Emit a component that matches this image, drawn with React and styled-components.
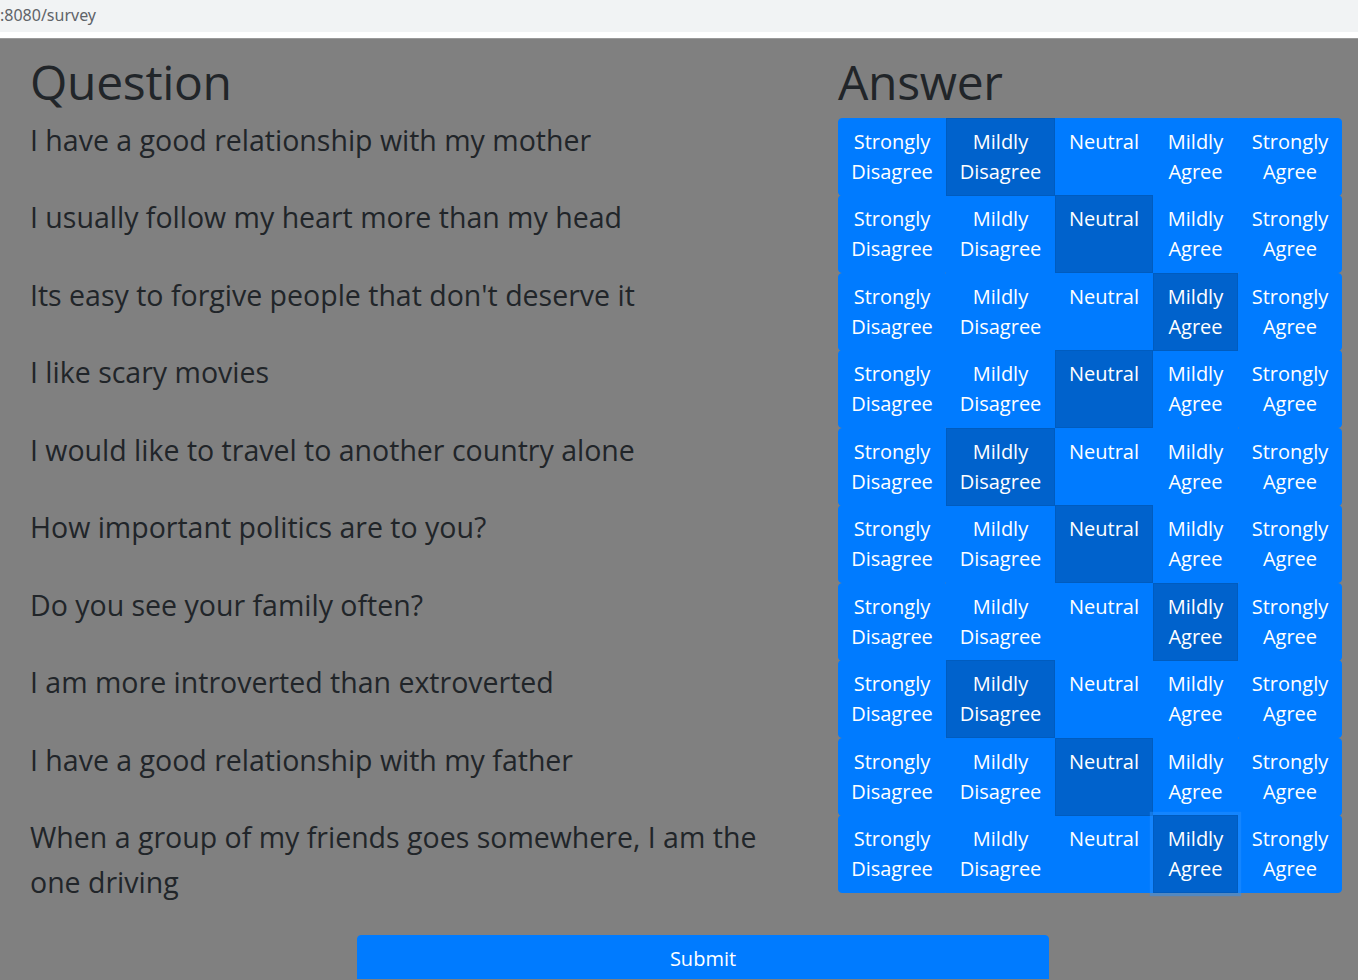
import React from "react";
import styled, { createGlobalStyle, css } from "styled-components";

const GlobalStyle = createGlobalStyle`
  html, body { margin: 0; padding: 0; }
  body {
    background: #808080;
    font-family: "Open Sans", "Noto Sans", Arial, sans-serif;
    color: #212529;
    overflow: hidden;
  }
`;

const BrowserBar = styled.div`
  height: 32px;
  background: #f1f3f4;
  border-bottom: 6px solid #ffffff;
  display: flex;
  align-items: center;
  font-family: "Noto Sans", "Open Sans", Arial, sans-serif;
  font-size: 16px;
  color: #5f6368;
  white-space: nowrap;
`;

const UrlText = styled.span`
  margin-left: 0;
  margin-top: -2px;
`;

const Page = styled.div`
  background: #808080;
  border-top: 1px solid #9a9a9a;
  height: 941px;
  box-sizing: border-box;
  overflow: hidden;
`;

const Survey = styled.div`
  display: grid;
  grid-template-columns: 1fr 504px;
  column-gap: 30px;
  padding: 0 16px 0 30px;
`;

const Heading = styled.h1`
  margin: 14px 0 7px;
  font-size: 48px;
  line-height: 57.6px;
  font-weight: 400;
  color: #212529;
  letter-spacing: -0.3px;
`;

const Question = styled.div`
  height: 77.5px;
  font-size: 28.5px;
  line-height: 45px;
  color: #212529;
  white-space: normal;
  padding-right: 20px;
`;

const ButtonGroup = styled.div`
  display: grid;
  grid-template-columns: 108px 109px 98px 85px 104px;
  height: 77.5px;
  position: relative;
`;

const AnswerButton = styled.button`
  font-family: inherit;
  font-size: 20px;
  line-height: 30px;
  color: #ffffff;
  background: #007bff;
  border: 1px solid #007bff;
  padding: 8px 0;
  margin: 0;
  display: flex;
  flex-direction: column;
  align-items: center;
  justify-content: flex-start;
  white-space: nowrap;
  cursor: pointer;
  position: relative;
  &:first-child { border-radius: 4px 0 0 4px; }
  &:last-child { border-radius: 0 4px 4px 0; }
  ${(p) =>
    p.$active &&
    css`
      background: #0062cc;
      border-color: #005cbf;
      z-index: 1;
    `}
  ${(p) =>
    p.$focused &&
    css`
      box-shadow: 0 0 0 3.2px rgba(38, 143, 255, 0.5);
      z-index: 2;
    `}
`;

const Line = styled.span`
  display: block;
`;

const Footer = styled.div`
  display: flex;
  padding: 42px 309px 0 357px;
`;

const SubmitButton = styled.button`
  flex: 1;
  font-family: inherit;
  font-size: 20px;
  line-height: 30px;
  padding: 8px 16px;
  color: #ffffff;
  background: #007bff;
  border: 1px solid #007bff;
  border-radius: 4px;
  cursor: pointer;
`;

const OPTIONS = [
  ["Strongly", "Disagree"],
  ["Mildly", "Disagree"],
  ["Neutral", ""],
  ["Mildly", "Agree"],
  ["Strongly", "Agree"],
];

const QUESTIONS = [
  ["I have a good relationship with my mother", 1],
  ["I usually follow my heart more than my head", 2],
  ["Its easy to forgive people that don't deserve it", 3],
  ["I like scary movies", 2],
  ["I would like to travel to another country alone", 1],
  ["How important politics are to you?", 2],
  ["Do you see your family often?", 3],
  ["I am more introverted than extroverted", 1],
  ["I have a good relationship with my father", 2],
  ["When a group of my friends goes somewhere, I am the one driving", 3],
];

export default function App() {
  const [answers, setAnswers] = React.useState(QUESTIONS.map((q) => q[1]));
  return (
    <>
      <GlobalStyle />
      <BrowserBar>
        <UrlText>:8080/survey</UrlText>
      </BrowserBar>
      <Page>
        <Survey>
          <Heading>Question</Heading>
          <Heading>Answer</Heading>
          {QUESTIONS.map(([text], qi) => (
            <React.Fragment key={qi}>
              <Question>{text}</Question>
              <ButtonGroup>
                {OPTIONS.map(([a, b], oi) => (
                  <AnswerButton
                    key={oi}
                    $active={answers[qi] === oi}
                    $focused={qi === QUESTIONS.length - 1 && answers[qi] === oi}
                    onClick={() =>
                      setAnswers((prev) => prev.map((v, i) => (i === qi ? oi : v)))
                    }
                  >
                    <Line>{a}</Line>
                    {b && <Line>{b}</Line>}
                  </AnswerButton>
                ))}
              </ButtonGroup>
            </React.Fragment>
          ))}
        </Survey>
        <Footer>
          <SubmitButton>Submit</SubmitButton>
        </Footer>
      </Page>
    </>
  );
}
